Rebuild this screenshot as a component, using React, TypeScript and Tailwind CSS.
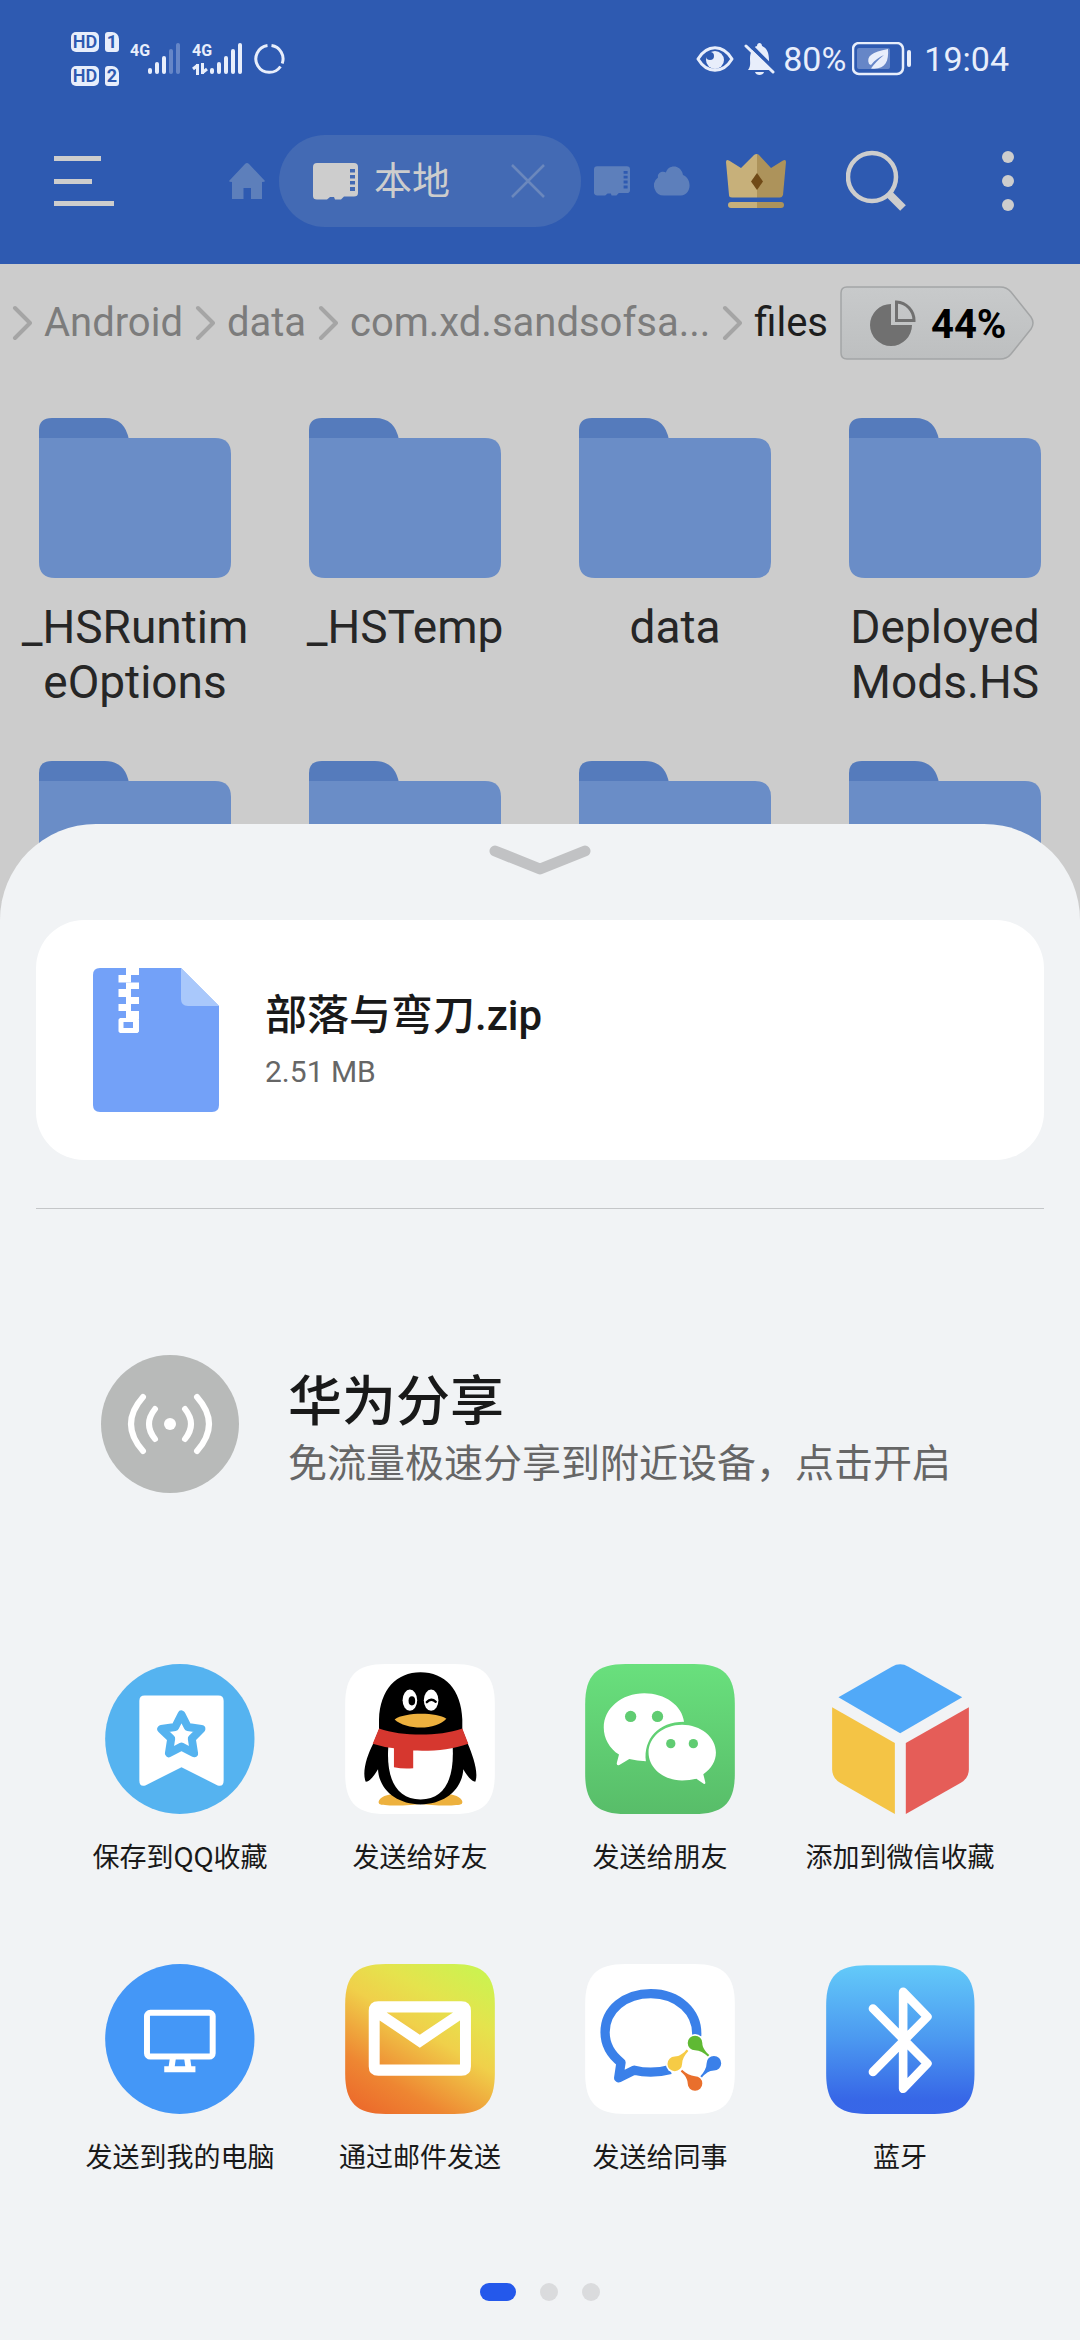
import type { ReactNode } from "react";

const SQUIRCLE =
  "M0 122C0 34 34 0 122 0H329C417 0 451 34 451 122V330C451 418 417 452 329 452H122C34 452 0 418 0 330Z";

function SignalBars({ weak = false }: { weak?: boolean }) {
  return (
    <svg className="h-8 w-[33px]" viewBox="0 0 33 32" fill="#e8eefb" aria-hidden="true">
      <rect x="0" y="25" width="4" height="6" rx="2" />
      <rect x="7" y="19" width="4" height="12" rx="2" />
      <rect x="14" y="13" width="4" height="18" rx="2" />
      <rect x="21" y="6" width="4" height="25" rx="2" opacity={weak ? 0.3 : 1} />
      <rect x="28" y="0" width="4" height="31" rx="2" opacity={weak ? 0.3 : 1} />
    </svg>
  );
}

function SimRow({ slot }: { slot: string }) {
  return (
    <div className="flex gap-[6px]">
      <span className="flex h-5 w-7 items-center justify-center rounded-[5px] bg-[#e8eefb] text-[18px] leading-5 font-semibold">
        HD
      </span>
      <span className="flex h-5 w-[14px] items-center justify-center rounded-[3px] rounded-tr-[7px] bg-[#e8eefb] text-[18px] leading-5 font-bold">
        {slot}
      </span>
    </div>
  );
}

function StatusBar() {
  return (
    <div className="flex h-[118px] items-center justify-between px-[71px] text-[#e8eefb]">
      <div className="flex items-center gap-[11px]">
        <div className="flex flex-col gap-[14px] text-[#2e5ab1]">
          <SimRow slot="1" />
          <SimRow slot="2" />
        </div>
        <div className="flex">
          <span className="w-[18px] text-base leading-4 font-bold">4G</span>
          <SignalBars weak />
        </div>
        <div className="flex">
          <div className="flex w-[18px] flex-col justify-between">
            <span className="text-base leading-4 font-bold">4G</span>
            <svg className="h-3 w-4" viewBox="0 0 16 12" fill="none" stroke="#e8eefb" strokeWidth="3" aria-hidden="true">
              <path d="M5.500 12V1M6 2L1 6M10.500 0V11M10 10L15 6" />
            </svg>
          </div>
          <SignalBars />
        </div>
        <svg className="h-8 w-[31px]" viewBox="0 0 31 32" fill="none" stroke="#e8eefb" strokeWidth="3" aria-hidden="true">
          <path d="M17.500 2.500A13.500 13.500 0 0 1 28.200 20.500M26.500 23.500A13.500 13.500 0 1 1 13.500 2.500" />
        </svg>
      </div>
      <div className="flex items-center">
        <svg className="h-8 w-[38px]" viewBox="695 43 38 32" aria-hidden="true">
          <path d="M697 59C706 44 722 44 731 59C722 74 706 74 697 59Z" fill="none" stroke="#e8eefb" strokeWidth="3" strokeLinejoin="round" />
          <circle cx="714" cy="60" r="9" fill="#e8eefb" />
          <circle cx="709" cy="56" r="4" fill="#2e5ab1" />
        </svg>
        <svg className="ml-[10px] h-8 w-[31px]" viewBox="744 43 31 32" aria-hidden="true">
          <path d="M748 70C751 66 750 62 750 59C750 52 753 47 757 46C757 42 762 42 762 46C767 48 769 53 769 60C769 65 770 67 772 70ZM755 72H764C763 76 756 76 755 72Z" fill="#e8eefb" />
          <path d="M748 43L777 72" stroke="#2e5ab1" strokeWidth="4" />
          <path d="M746 46L773 72" stroke="#e8eefb" strokeWidth="3" strokeLinecap="round" />
        </svg>
        <span className="ml-2 text-[34px] leading-10">80%</span>
        <svg className="ml-[6px] h-[34px] w-[60px]" viewBox="853 43 60 34" aria-hidden="true">
          <rect x="854" y="44" width="50" height="31" rx="6" fill="none" stroke="#e8eefb" strokeWidth="2.500" />
          <rect x="858" y="49" width="33" height="21" rx="2" fill="#e8eefb" opacity="0.3" />
          <path d="M872 66C876 61 880 58 885 56C879 61 875 65 872 69.500C886 71 890 63 889 50C873 53 867 57 870 65Z" fill="#e8eefb" />
          <rect x="908" y="51" width="4" height="17" rx="2" fill="#e8eefb" />
        </svg>
        <span className="ml-3 text-[34px] leading-10">19:04</span>
      </div>
    </div>
  );
}

function StorageIcon({ className }: { className: string }) {
  return (
    <svg className={className} viewBox="0 0 45 37" fill="currentColor" aria-hidden="true">
      <path
        fillRule="evenodd"
        d="M4 0H41Q45 0 45 4V30Q45 33.500 41 33.500H31L28 36.500H22L21 34H17L14 36.500H4Q0 36.500 0 33V4Q0 0 4 0ZM37 6V9.500H42V6ZM37 12V15.500H42V12ZM37 18V21.500H42V18ZM37 24V28H42V24Z"
      />
    </svg>
  );
}

function Toolbar() {
  return (
    <div className="flex items-center pt-[17px] pr-[66px] pb-[37px] pl-[54px] text-[#cdcdcd]">
      <button aria-label="菜单" className="flex h-[50px] w-[60px] shrink-0 flex-col items-start justify-between">
        <span className="h-[5px] w-[47px] bg-current" />
        <span className="h-[5px] w-[38px] bg-current" />
        <span className="h-[5px] w-[60px] bg-current" />
      </button>
      <nav className="ml-auto flex items-center">
        <button aria-label="主页" className="text-[#5d7fbb]">
          <svg className="h-9 w-9" viewBox="0 0 36 36" fill="currentColor" aria-hidden="true">
            <path d="M18 0Q19 0 20 1L36 18Q36 19 33 19V36H22V25H14.500V36H3V19Q0 19 0 18L16 1Q17 0 18 0Z" />
          </svg>
        </button>
        <div className="ml-[14px] flex h-[92px] w-[302px] items-center rounded-full bg-[#436ab4] pr-9 pl-[34px]">
          <button className="flex items-center gap-4 text-[38px] leading-[46px]">
            <StorageIcon className="h-[37px] w-[45px]" />
            本地
          </button>
          <button aria-label="关闭标签" className="ml-auto">
            <svg className="h-[34px] w-[34px]" viewBox="0 0 34 34" fill="none" stroke="#6b88bd" strokeWidth="2.500" aria-hidden="true">
              <path d="M1 1L33 33M33 1L1 33" />
            </svg>
          </button>
        </div>
        <button aria-label="存储" className="ml-[13px] text-[#5d7fbb]">
          <StorageIcon className="h-[30px] w-9" />
        </button>
        <button aria-label="云端" className="ml-6 text-[#5d7fbb]">
          <svg className="h-[30px] w-9" viewBox="0 0 36 30" fill="currentColor" aria-hidden="true">
            <path d="M10 29.500A10 10 0 0 1 4 11.500C3 7 8 4.500 12 6.500C14-1.500 27-2 29 9C39 13 37 29.500 27 29.500Z" />
          </svg>
        </button>
      </nav>
      <button aria-label="会员" className="ml-9">
        <svg className="h-[60px] w-[60px]" viewBox="726 148 60 60" aria-hidden="true">
          <path d="M757 151Q755 151 754 152L741 165L729 157.500Q726 156 726 159L729 192Q729 194.500 732 194.500H757Z" fill="#c7b07a" />
          <path d="M757 151Q758 151 759 152L771 165L783 157.500Q786 156 786 159L783 192Q782 194.500 780 194.500H757Z" fill="#ad935b" />
          <path d="M757 199H731A3 3 0 0 0 731 205H757Z" fill="#c7b07a" />
          <path d="M757 199H781A3 3 0 0 1 781 205H757Z" fill="#ad935b" />
          <path d="M757 170L763 178.500L757 187L751 178.500Z" fill="#704a17" />
        </svg>
      </button>
      <button aria-label="搜索" className="ml-[60px]">
        <svg className="h-[62px] w-[62px]" viewBox="846 150 62 62" fill="none" stroke="currentColor" aria-hidden="true">
          <circle cx="872" cy="177" r="24" strokeWidth="4.500" />
          <path d="M889 194L903 208" strokeWidth="8" />
        </svg>
      </button>
      <button aria-label="更多" className="ml-[94px] flex h-[60px] flex-col justify-between">
        <span className="h-3 w-3 rounded-full bg-current" />
        <span className="h-3 w-3 rounded-full bg-current" />
        <span className="h-3 w-3 rounded-full bg-current" />
      </button>
    </div>
  );
}

function CrumbArrow() {
  return (
    <svg className="h-9 w-5 shrink-0" viewBox="0 0 20 36" fill="none" stroke="#a5a5a5" strokeWidth="4" strokeLinecap="round" strokeLinejoin="round" aria-hidden="true">
      <path d="M3 3L18 18L3 33" />
    </svg>
  );
}

function Breadcrumbs() {
  return (
    <div className="flex h-[74px] items-center justify-between pr-[46px] pl-3 text-[40px] text-[#7c7c7c]">
      <CrumbArrow />
      <a href="#android">Android</a>
      <CrumbArrow />
      <a href="#data">data</a>
      <CrumbArrow />
      <a href="#package">com.xd.sandsofsa...</a>
      <CrumbArrow />
      <a href="#files" className="text-[#1e1e1e]">files</a>
      <button className="relative flex h-[74px] w-[194px] items-center gap-[15px] pl-[30px] font-bold text-black">
        <svg className="absolute inset-0 h-full w-full" viewBox="0 0 194 74" aria-hidden="true">
          <defs>
            <linearGradient id="badge" x1="0" y1="0" x2="0" y2="1">
              <stop offset="0" stopColor="#c8cacb" />
              <stop offset="1" stopColor="#bdbfc0" />
            </linearGradient>
          </defs>
          <path d="M7 1H160Q167 1 171 6L191 31Q195 37 191 43L171 68Q167 73 160 73H7Q1 73 1 67V7Q1 1 7 1Z" fill="url(#badge)" stroke="#a3a5a6" strokeWidth="1.500" />
        </svg>
        <svg className="relative h-[46px] w-[46px]" viewBox="0 0 46 46" aria-hidden="true">
          <path d="M21 4A21 21 0 1 0 42 25H21Z" fill="#707070" />
          <path d="M26.500 2V20.500H44A18.500 18.500 0 0 0 26.500 2Z" fill="none" stroke="#707070" strokeWidth="3" />
        </svg>
        <span className="relative pt-1">44%</span>
      </button>
    </div>
  );
}

function Folder({ name }: { name?: string }) {
  return (
    <button className="flex h-[343px] flex-col items-center px-4 text-[46px] leading-[55px] text-[#262626]">
      <svg className="h-40 w-48 shrink-0" viewBox="0 0 192 160" aria-hidden="true">
        <path d="M0 22V12Q0 0 13 0H66Q86 0 90 22Z" fill="#557bbc" />
        <path d="M0 20H176Q192 20 192 36V144Q192 160 176 160H16Q0 160 0 144Z" fill="#6a8dc7" />
      </svg>
      {name && <span className="mt-[22px] whitespace-pre-line">{name}</span>}
    </button>
  );
}

const FOLDERS = ["_HSRuntim\neOptions", "_HSTemp", "data", "Deployed\nMods.HS"];

function QQFavoriteIcon() {
  return (
    <svg className="size-[150px]" viewBox="135 73 451 452" aria-hidden="true">
      <ellipse cx="360" cy="299" rx="225" ry="226" fill="#55b3f0" />
      <path d="M254 168H476Q492 168 492 184V424Q492 444 474 439L365 384L256 439Q238 444 238 424V184Q238 168 254 168Z" fill="#fff" />
      <path d="M365 225L384 263L425 269L396 298L403 342L365 322L327 342L334 298L304 269L346 263Z" fill="none" stroke="#55b3f0" strokeWidth="24" strokeLinejoin="round" />
    </svg>
  );
}

function QQIcon() {
  return (
    <svg className="size-[150px]" viewBox="855 73 451 452" aria-hidden="true">
      <path d={SQUIRCLE} transform="translate(855 73)" fill="#fff" />
      <path d="M990 466C965 470 950 485 958 495C968 502 1060 500 1082 494C1110 500 1195 502 1206 495C1215 485 1198 470 1175 466Z" fill="#edb13e" />
      <path d="M1082 98C1010 98 960 150 957 240L957 270L940 312C920 350 905 400 917 428C930 428 945 405 954 390C956 450 1010 496 1082 496C1155 496 1208 450 1211 390C1220 405 1232 425 1247 428C1258 400 1240 350 1224 312L1208 270V240C1205 150 1155 98 1082 98Z" />
      <path d="M985 322C978 420 1010 481 1082 481C1155 481 1184 420 1179 322Z" fill="#fff" />
      <path d="M957 267C1030 292 1135 292 1208 267L1226 313C1175 332 1120 336 1060 334V387Q1030 390 1002 384V327Q970 323 938 313Z" fill="#d6372f" />
      <ellipse cx="1050" cy="182" rx="22" ry="32" fill="#fff" />
      <ellipse cx="1114" cy="182" rx="22" ry="32" fill="#fff" />
      <ellipse cx="1056" cy="184" rx="10" ry="14" />
      <path d="M1101 188Q1114 174 1128 187" fill="none" stroke="#000" strokeWidth="7" strokeLinecap="round" />
      <path d="M1004 240C1035 218 1130 218 1160 238C1130 273 1040 273 1004 240Z" fill="#edb13e" />
    </svg>
  );
}

function WeChatIcon() {
  return (
    <svg className="size-[150px]" viewBox="135 73 451 452" aria-hidden="true">
      <defs>
        <linearGradient id="wechat" x1="0" y1="0" x2="0" y2="1">
          <stop offset="0" stopColor="#69e07d" />
          <stop offset="1" stopColor="#58bd69" />
        </linearGradient>
      </defs>
      <path d={SQUIRCLE} transform="translate(135 73)" fill="url(#wechat)" />
      <path d="M313 161C245 161 191 207 191 264C191 297 208 327 237 346L230 372Q230 380 238 377L268 359Q292 365 318 366C310 300 355 247 433 247C427 198 376 161 313 161Z" fill="#fff" />
      <path d="M427 256C371 256 326 293 326 340C326 387 371 424 427 424Q450 424 470 419L492 434Q498 436 497 429L491 405C515 389 529 366 529 340C529 293 483 256 427 256Z" fill="#fff" />
      <g fill="#60cc72">
        <circle cx="272" cy="231" r="17" />
        <circle cx="353" cy="231" r="17" />
        <circle cx="393" cy="313" r="14" />
        <circle cx="461" cy="313" r="14" />
      </g>
    </svg>
  );
}

function WeChatFavoriteIcon() {
  return (
    <svg className="size-[150px]" viewBox="855 73 451 452" aria-hidden="true">
      <path d="M895 173L1056 81Q1081 67 1106 81L1268 173L1081 282Z" fill="#51a9f8" />
      <path d="M876 203L1065 311V525L900 431Q876 416 876 390Z" fill="#f4c445" />
      <path d="M1288 203L1098 311V525L1264 431Q1288 416 1288 390Z" fill="#e55d58" />
    </svg>
  );
}

function ComputerIcon() {
  return (
    <svg className="size-[150px]" viewBox="135 73 451 452" aria-hidden="true">
      <ellipse cx="360" cy="299" rx="225" ry="226" fill="#4497f7" />
      <g fill="none" stroke="#fff" strokeWidth="18">
        <rect x="261" y="220" width="198" height="132" rx="10" />
        <path d="M313 390H407M339 357L335 385M382 357L386 385" />
      </g>
    </svg>
  );
}

function MailIcon() {
  return (
    <svg className="size-[150px]" viewBox="855 73 451 452" aria-hidden="true">
      <defs>
        <linearGradient id="mail" x1="0.200" y1="1" x2="0.800" y2="0">
          <stop offset="0" stopColor="#ec6d2c" />
          <stop offset="0.200" stopColor="#ee8632" />
          <stop offset="0.550" stopColor="#f0d04a" />
          <stop offset="0.750" stopColor="#e5e34d" />
          <stop offset="1" stopColor="#cdf250" />
        </linearGradient>
      </defs>
      <path d={SQUIRCLE} transform="translate(855 73)" fill="url(#mail)" />
      <path fillRule="evenodd" d="M955 185H1205Q1234 185 1234 214V382Q1234 410 1205 410H955Q926 410 926 382V214Q926 185 955 185ZM980 219L1080 286L1180 219ZM959 243V376H1201V243L1080 325Z" fill="#fff" />
    </svg>
  );
}

function WeComIcon() {
  const drop = "M22 0C22 14 32 27 43 36L39 41C27 30 14 22 0 22A22 22 0 1 1 22 0Z";
  return (
    <svg className="size-[150px]" viewBox="135 73 451 452" aria-hidden="true">
      <path d={SQUIRCLE} transform="translate(135 73)" fill="#fff" />
      <path d="M471 290C475 218 415 162 333 162C255 162 195 210 195 279C195 315 212 346 243 370L236 416L283 393Q335 406 392 391" fill="none" stroke="#3a80e9" strokeWidth="28" strokeLinejoin="round" />
      <circle cx="466" cy="311" r="27" fill="#fff" />
      <circle cx="405" cy="374" r="27" fill="#fff" />
      <path d={drop} transform="translate(466 311)" fill="#5fb933" />
      <path d={drop} transform="translate(523 372) rotate(90)" fill="#3a80e9" />
      <path d={drop} transform="translate(466 433) rotate(180)" fill="#e96f2c" />
      <path d={drop} transform="translate(405 374) rotate(270)" fill="#f6cb45" />
    </svg>
  );
}

function BluetoothIcon() {
  return (
    <svg className="size-[150px]" viewBox="855 73 451 452" aria-hidden="true">
      <defs>
        <linearGradient id="bluetooth" x1="0" y1="0" x2="0" y2="1">
          <stop offset="0" stopColor="#63caf9" />
          <stop offset="0.500" stopColor="#4b98f0" />
          <stop offset="0.900" stopColor="#3767e7" />
          <stop offset="1" stopColor="#3866e8" />
        </linearGradient>
      </defs>
      <path d={SQUIRCLE} transform="translate(858 77) scale(0.991)" fill="url(#bluetooth)" />
      <path d="M999 207L1163 373L1090 449V157L1163 232L999 398" fill="none" stroke="#fff" strokeWidth="26" strokeLinecap="round" strokeLinejoin="round" />
    </svg>
  );
}

const TARGETS: { label: string; icon: ReactNode }[] = [
  { label: "保存到QQ收藏", icon: <QQFavoriteIcon /> },
  { label: "发送给好友", icon: <QQIcon /> },
  { label: "发送给朋友", icon: <WeChatIcon /> },
  { label: "添加到微信收藏", icon: <WeChatFavoriteIcon /> },
  { label: "发送到我的电脑", icon: <ComputerIcon /> },
  { label: "通过邮件发送", icon: <MailIcon /> },
  { label: "发送给同事", icon: <WeComIcon /> },
  { label: "蓝牙", icon: <BluetoothIcon /> },
];

function ZipIcon() {
  return (
    <svg className="h-36 w-[126px] shrink-0" viewBox="0 0 126 144" aria-hidden="true">
      <path d="M7 0H88L126 38V137Q126 144 119 144H7Q0 144 0 137V7Q0 0 7 0Z" fill="#73a1f8" />
      <path d="M88 0L126 38H95Q88 38 88 31Z" fill="#a9c8fb" />
      <g fill="#fff">
        <path d="M33 0H46V7H33ZM33 14.500H46V21H33ZM33 29H46V36H33ZM33 43H46V51H33Z" />
        <path d="M25.500 7H38V14.500H25.500ZM25.500 21H38V29H25.500ZM25.500 36H38V43H25.500Z" />
        <path fillRule="evenodd" d="M27 50H44.500L46 51.500V63.500L44.500 65H27L25.500 63.500V51.500ZM30.500 54V60H40V54Z" />
      </g>
    </svg>
  );
}

function ShareSheet() {
  return (
    <section aria-label="分享" className="z-10 self-end rounded-t-[96px] bg-[#f1f3f5] px-9 pt-5 pb-[39px] [grid-area:1/1]">
      <button aria-label="收起" className="mx-auto block">
        <svg className="h-8 w-[104px]" viewBox="0 0 104 32" fill="none" stroke="#c1c2c4" strokeWidth="11" strokeLinecap="round" strokeLinejoin="round" aria-hidden="true">
          <path d="M7 7L52 25L97 7" />
        </svg>
      </button>
      <div className="mt-11 flex h-60 items-center gap-[46px] rounded-[48px] bg-white px-[57px]">
        <ZipIcon />
        <div>
          <h1 className="text-[42px] leading-[56px] font-medium text-[#191919]">部落与弯刀.zip</h1>
          <p className="mt-2 text-[30px] leading-10 text-[#666]">2.51 MB</p>
        </div>
      </div>
      <hr className="mt-12 border-t border-[#c4c6c8]" />
      <button className="mt-[146px] ml-[65px] flex items-center gap-[49px] text-left">
        <svg className="size-[138px] shrink-0" viewBox="0 0 138 138" fill="none" stroke="#fff" strokeWidth="6" strokeLinecap="round" aria-hidden="true">
          <circle cx="69" cy="69" r="69" fill="#b8bab9" stroke="none" />
          <circle cx="69" cy="69" r="6" fill="#fff" stroke="none" />
          <path d="M84 54Q96 69 84 84M54 54Q42 69 54 84M96 42Q120 69 96 96M42 42Q18 69 42 96" />
        </svg>
        <span className="flex flex-col pt-4">
          <span className="text-[54px] leading-[64px] font-medium text-[#191919]">华为分享</span>
          <span className="text-[39px] leading-[58px] text-[#666]">免流量极速分享到附近设备，点击开启</span>
        </span>
      </button>
      <div className="mt-[171px] grid grid-cols-4 gap-y-[90px] px-6 font-['Noto_Sans_CJK_SC',sans-serif]">
        {TARGETS.map(({ label, icon }) => (
          <button key={label} className="flex flex-col items-center gap-6 text-[27px] leading-9 whitespace-nowrap text-[#191919]">
            {icon}
            <span>{label}</span>
          </button>
        ))}
      </div>
      <div className="mt-[109px] flex justify-center gap-6">
        <button aria-label="第 1 页" className="h-[18px] w-9 rounded-full bg-[#2458eb]" />
        <button aria-label="第 2 页" className="h-[18px] w-[18px] rounded-full bg-[#dadbdd]" />
        <button aria-label="第 3 页" className="h-[18px] w-[18px] rounded-full bg-[#dadbdd]" />
      </div>
    </section>
  );
}

export default function App() {
  return (
    <div className="grid min-h-screen overflow-hidden bg-[#ccc] font-['Roboto','Noto_Sans_CJK_SC',sans-serif]">
      <main className="[grid-area:1/1]">
        <header className="bg-[#2e5ab1]">
          <StatusBar />
          <Toolbar />
        </header>
        <div className="pt-[22px]">
          <Breadcrumbs />
          <div className="mt-[58px] grid grid-cols-4">
            {FOLDERS.map((name) => (
              <Folder key={name} name={name} />
            ))}
            {FOLDERS.map((name) => (
              <Folder key={`next-${name}`} />
            ))}
          </div>
        </div>
      </main>
      <ShareSheet />
    </div>
  );
}
